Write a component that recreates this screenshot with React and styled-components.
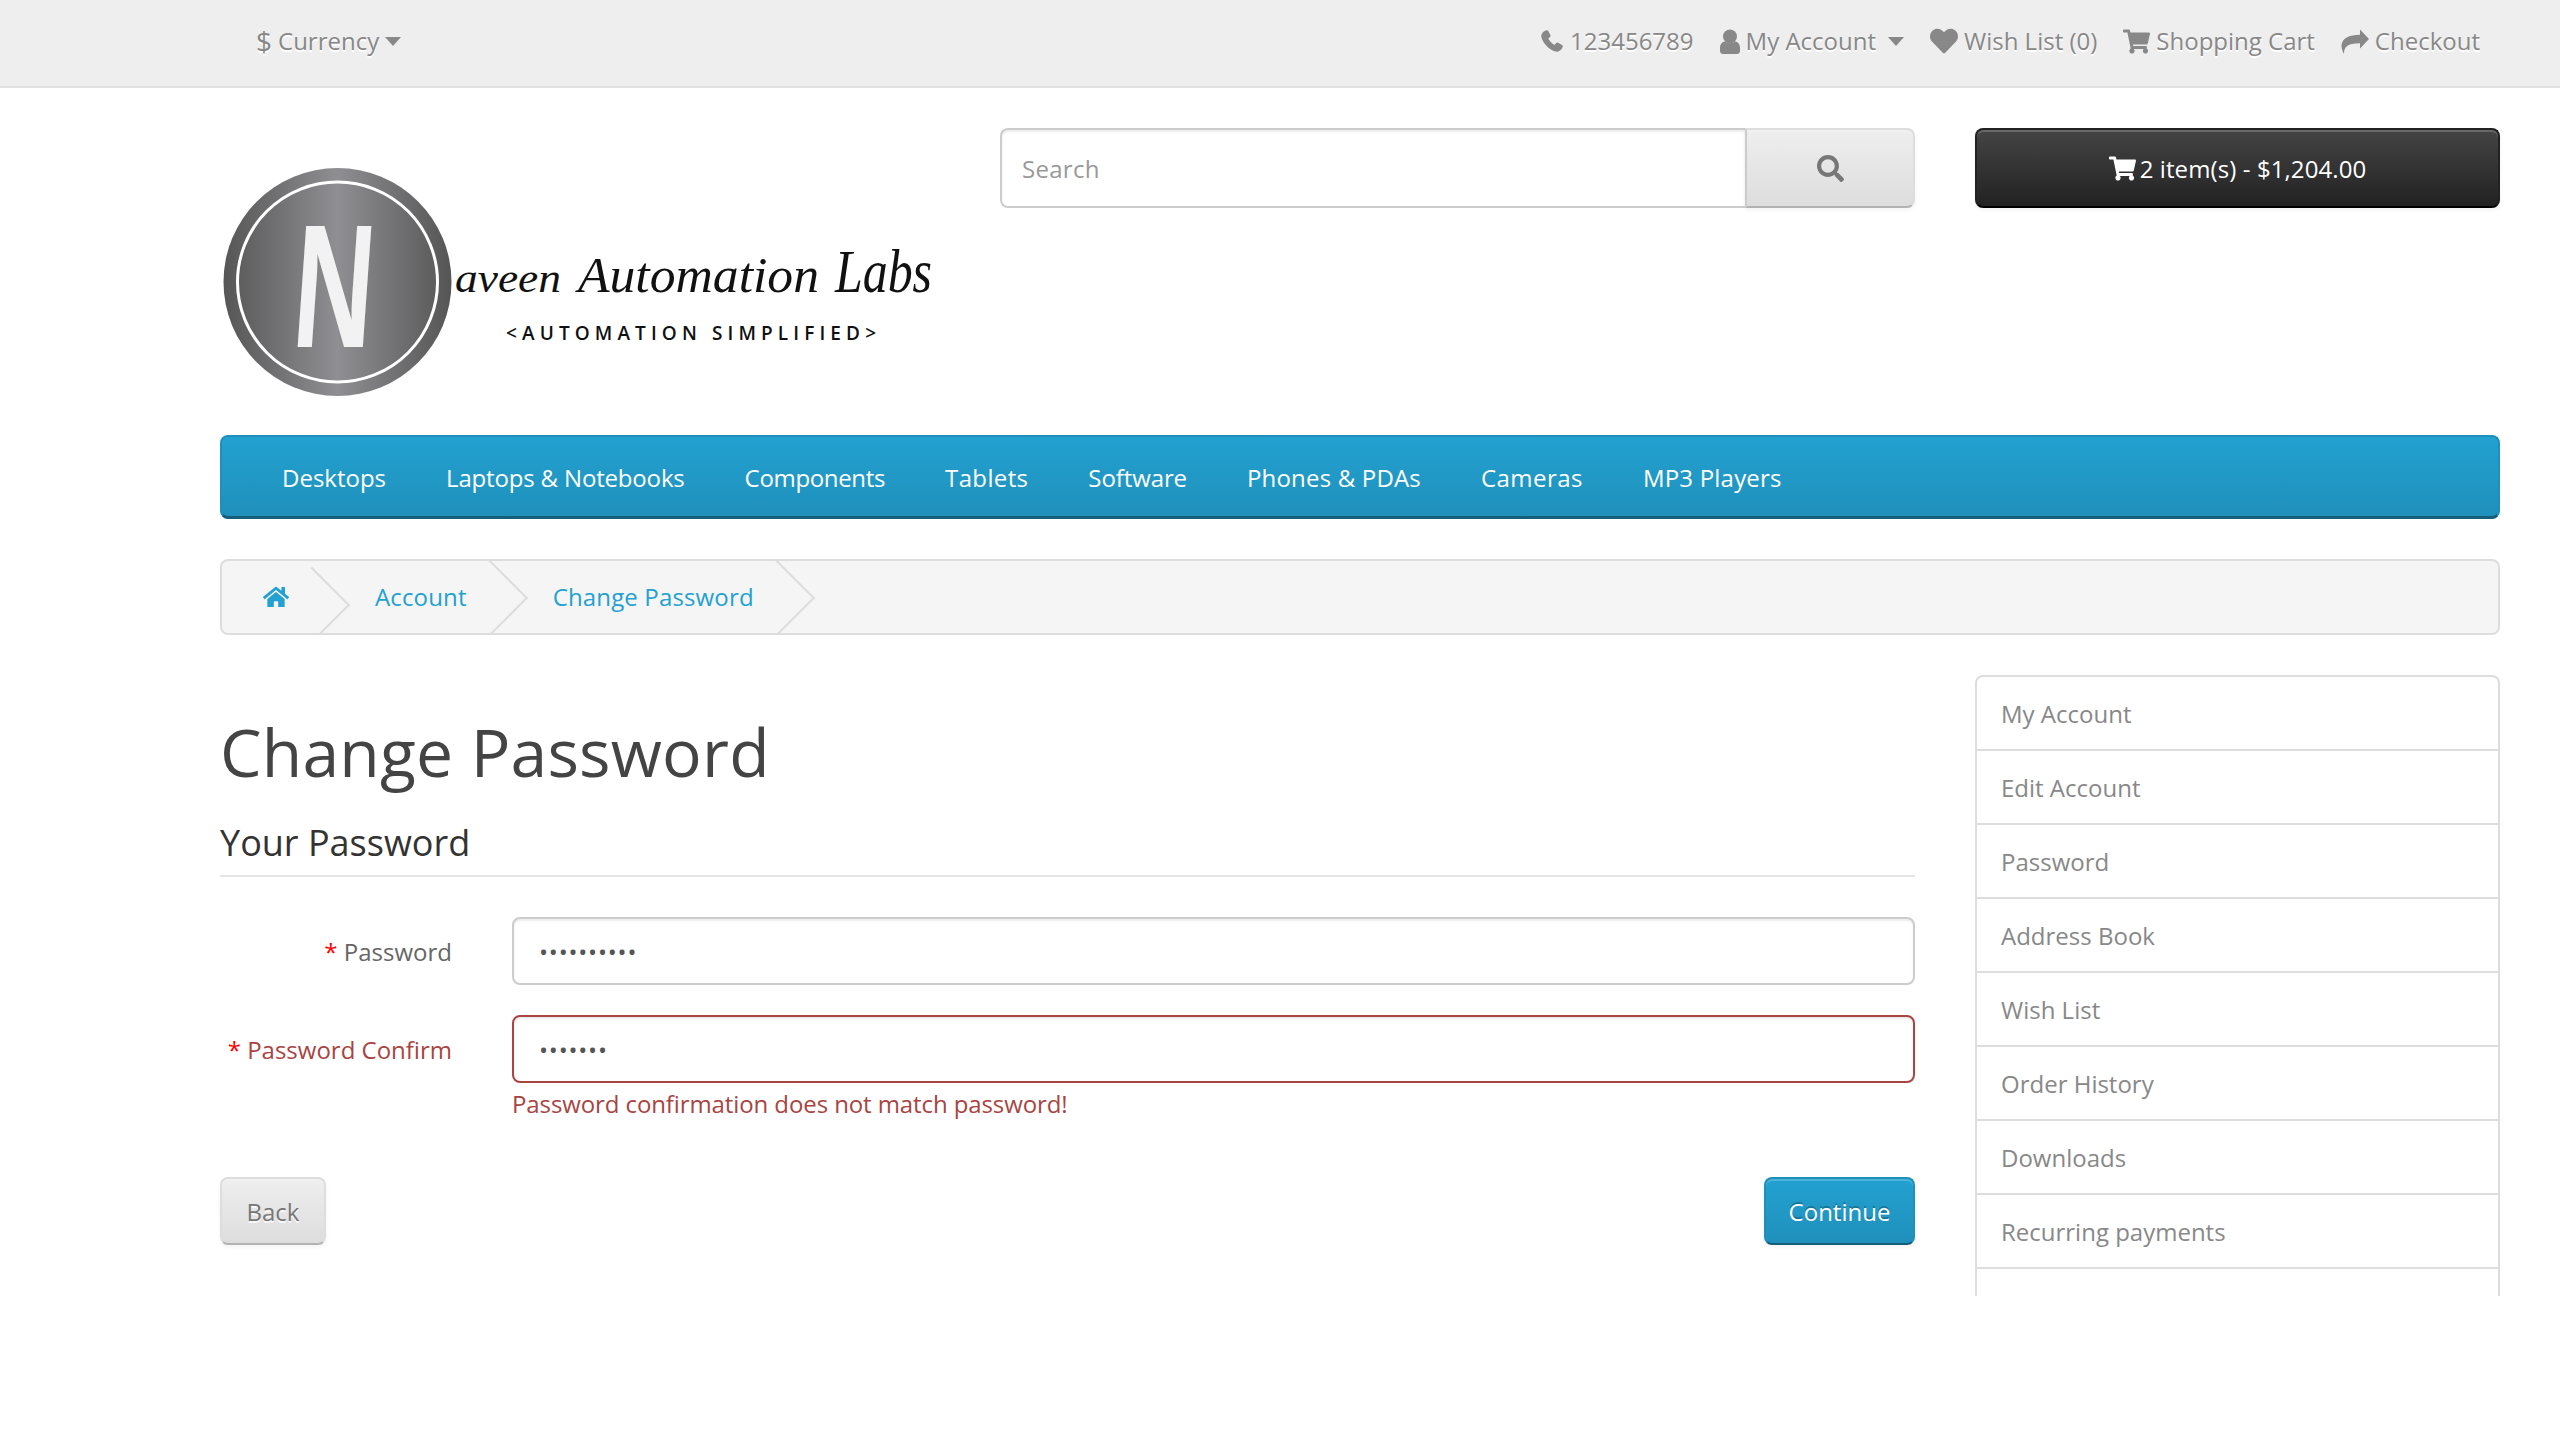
import React from 'react';
import styled, { createGlobalStyle } from 'styled-components';
import { FaHeart, FaShoppingCart, FaSearch, FaHome } from 'react-icons/fa';

const GlobalStyle = createGlobalStyle`
    html, body {
        margin: 0;
        background: #fff;
        overflow: hidden;
    }
    body {
        font-family: "Open Sans", sans-serif;
        font-size: 24px;
        line-height: 40px;
        color: #666;
    }
    * {
        box-sizing: border-box;
    }
`;

const TopBar = styled.div`
    height: 88px;
    background: #eee;
    border-bottom: 2px solid #e2e2e2;
    padding: 0 80px 4px 256px;
    display: flex;
    align-items: center;
    justify-content: space-between;
`;

const TopGroup = styled.div`
    display: flex;
    align-items: center;
    gap: 26px;
`;

const TopLink = styled.a`
    display: flex;
    align-items: center;
    gap: 6px;
    color: #888;
    text-shadow: 0 2px 0 #fff;
    svg {
        flex: none;
        fill: #888;
    }
`;

const HeartIcon = styled(FaHeart)`
    font-size: 28px;
`;

const CartIcon = styled(FaShoppingCart)`
    font-size: 27px;
`;

const Dollar = styled.span`
    font-size: 28px;
`;

const Caret = styled.span`
    width: 0;
    height: 0;
    margin-left: ${({$left}) => $left || 0}px;
    border-top: 9px solid #888;
    border-left: 8px solid transparent;
    border-right: 8px solid transparent;
`;

const Container = styled.div`
    width: 2340px;
    margin-left: 190px;
`;

const Header = styled.header`
    display: grid;
    grid-template-columns: 780px 975px 585px;
    padding-top: 40px;
`;

const HeaderCol = styled.div`
    padding: 0 30px;
`;

const Logo = styled.svg`
    display: block;
    width: 720px;
    height: 260px;
    margin-top: 22px;
    margin-bottom: 25px;
    overflow: visible;
`;

const SearchBox = styled.div`
    display: flex;
    height: 80px;
`;

const SearchInput = styled.input`
    flex: 1;
    min-width: 0;
    height: 80px;
    padding: 0 20px;
    font: 24px "Open Sans", sans-serif;
    letter-spacing: .3px;
    color: #555;
    border: 2px solid #ccc;
    border-right: 0;
    border-radius: 8px 0 0 8px;
    box-shadow: inset 0 2px 2px rgba(0, 0, 0, .075);
    &::placeholder {
        color: #999;
        opacity: 1;
    }
`;

const SearchButton = styled.button`
    width: 170px;
    height: 80px;
    padding: 0;
    display: flex;
    align-items: center;
    justify-content: center;
    color: #777;
    font-size: 27px;
    background: linear-gradient(to bottom, #eee, #ddd);
    border: 2px solid #ddd;
    border-left: 2px solid #ccc;
    border-bottom-color: #b3b3b3;
    border-radius: 0 8px 8px 0;
    box-shadow: inset 0 2px 0 rgba(255, 255, 255, .2), 0 2px 4px rgba(0, 0, 0, .05);
`;

const CartButton = styled.button`
    width: 100%;
    height: 80px;
    display: flex;
    align-items: center;
    justify-content: center;
    gap: 4px;
    font: 24px "Open Sans", sans-serif;
    letter-spacing: .1px;
    color: #fff;
    background: linear-gradient(to bottom, #444, #222);
    border: 2px solid #222;
    border-bottom-color: #000;
    border-radius: 8px;
    box-shadow: inset 0 2px 0 rgba(255, 255, 255, .2), 0 2px 4px rgba(0, 0, 0, .05);
    svg {
        font-size: 27px;
    }
`;

const Content = styled.div`
    padding: 0 30px;
    height: 861px;
    overflow: hidden;
`;

const Menu = styled.nav`
    height: 84px;
    display: flex;
    align-items: center;
    padding: 2px 0 0 30px;
    background: linear-gradient(to bottom, #23a1d1, #1f90bb);
    border: 2px solid #1f90bb;
    border-bottom: 3px solid #145e7a;
    border-radius: 8px;
`;

const MenuLink = styled.a`
    padding: 0 30px;
    color: #fff;
    letter-spacing: ${({$track}) => $track}px;
`;

const Breadcrumb = styled.ul`
    list-style: none;
    display: flex;
    align-items: center;
    height: 76px;
    margin: 40px 0;
    padding: 0 0 0 1px;
    background: #f5f5f5;
    border: 2px solid #ddd;
    border-radius: 8px;
    overflow: hidden;
`;

const Crumb = styled.li`
    position: relative;
    padding: 0 40px;
    margin-right: 6px;
    color: #23a1d1;
    letter-spacing: .15px;
    white-space: nowrap;
    display: flex;
    align-items: center;
    svg {
        font-size: 26px;
    }
    &::after {
        content: '';
        position: absolute;
        top: -6px;
        right: -10px;
        width: 52px;
        height: 52px;
        border-right: 2px solid #ddd;
        border-bottom: 2px solid #ddd;
        transform: rotate(-45deg);
    }
`;

const Columns = styled.div`
    display: grid;
    grid-template-columns: 1695px 525px;
    gap: 60px;
`;

const Title = styled.h1`
    margin: 40px 0 0;
    font-size: 66px;
    font-weight: 400;
    line-height: 72px;
    letter-spacing: .2px;
    color: #444;
`;

const Legend = styled.div`
    margin: 31px 0 40px;
    padding-bottom: 7px;
    font-size: 36px;
    line-height: 50px;
    color: #333;
    border-bottom: 2px solid #e5e5e5;
`;

const FormRow = styled.div`
    display: grid;
    grid-template-columns: 232px 1fr;
    column-gap: 60px;
    margin-bottom: ${({$last}) => ($last ? 0 : 30)}px;
`;

const Label = styled.label`
    padding-top: 15px;
    text-align: right;
    color: ${({$error}) => ($error ? '#a94442' : '#666')};
    &::before {
        content: '* ';
        color: #f00;
    }
`;

const Field = styled.input`
    width: 100%;
    height: 68px;
    padding: 0 25px;
    font: 24px "Open Sans", sans-serif;
    letter-spacing: .8px;
    color: #555;
    border: 2px solid ${({$error}) => ($error ? '#a94442' : '#ccc')};
    border-radius: 8px;
    box-shadow: inset 0 2px 2px rgba(0, 0, 0, .075);
`;

const ErrorText = styled.div`
    height: 40px;
    margin-top: 1px;
    letter-spacing: -.1px;
    color: #a94442;
`;

const Actions = styled.div`
    display: flex;
    justify-content: space-between;
    margin-top: 53px;
`;

const Button = styled.button`
    width: ${({$width}) => $width}px;
    height: 68px;
    padding: 0;
    font: 24px "Open Sans", sans-serif;
    color: ${({$primary}) => ($primary ? '#fff' : '#777')};
    text-shadow: ${({$primary}) => ($primary ? '0 -2px 0 rgba(0, 0, 0, .25)' : '0 2px 0 rgba(255, 255, 255, .75)')};
    background: ${({$primary}) => ($primary
        ? 'linear-gradient(to bottom, #23a1d1, #1f90bb)'
        : 'linear-gradient(to bottom, #eee, #ddd)')};
    border: 2px solid ${({$primary}) => ($primary ? '#1f90bb' : '#ddd')};
    border-bottom-color: ${({$primary}) => ($primary ? '#145e7a' : '#b3b3b3')};
    border-radius: 8px;
    box-shadow: inset 0 2px 0 rgba(255, 255, 255, .2), 0 2px 4px rgba(0, 0, 0, .05);
`;

const SideList = styled.div`
    border: 2px solid #ddd;
    border-bottom: 0;
    border-radius: 8px 8px 0 0;
`;

const SideItem = styled.a`
    display: block;
    height: 74px;
    padding: 17px 24px;
    color: #888;
    border-bottom: 2px solid #ddd;
`;

const accountLinks = [
    'My Account',
    'Edit Account',
    'Password',
    'Address Book',
    'Wish List',
    'Order History',
    'Downloads',
    'Recurring payments',
    '',
];

const menuLinks = [
    { label: 'Desktops', track: 0 },
    { label: 'Laptops & Notebooks', track: -0.17 },
    { label: 'Components', track: -0.33 },
    { label: 'Tablets', track: 0.35 },
    { label: 'Software', track: -0.1 },
    { label: 'Phones & PDAs', track: 0.18 },
    { label: 'Cameras', track: 0.46 },
    { label: 'MP3 Players', track: 0.2 },
];

const PhoneIcon = () => (
    <svg width="24" height="22" viewBox="-1 0 24 22">
        <path d="M5.5.3 7 .6l2.6 4.9-.3 1.2-2 1.9c.5 1.6 4.2 5.5 6.1 6.3l2-2.1 1.2-.3 4.9 2.7.3 1.4c-.2 1.9-3 5.1-5.6 5.1C9.5 21.7.3 12 .3 5.8.3 3.4 3.3.6 5.500.3Z" />
    </svg>
);

const UserIcon = () => (
    <svg width="20" height="25" viewBox="0 0 20 25">
        <circle cx="10" cy="7.5" r="7" />
        <path d="M0 19c0-4 2.500-6.500 5-6.500 2 2.300 8 2.300 10 0 2.500 0 5 2.500 5 6.500v3c0 2-1.500 3-3 3H3c-1.500 0-3-1-3-3Z" />
    </svg>
);

const ShareIcon = () => (
    <svg width="28" height="25" viewBox="0 0 28 25">
        <path d="M28 10 19 .5v5.200C8 5.700.5 9 .5 17c0 3 1.500 6.500 2.500 8 0-7 3-10.700 16-10.700v5.200Z" />
    </svg>
);

const LogoMark = () => (
    <Logo viewBox="0 0 720 260">
        <defs>
            <linearGradient id="disc" x1="0" x2="1" y1="0" y2="0">
                <stop offset="0" stopColor="#565656" />
                <stop offset="0.5" stopColor="#8f8f93" />
                <stop offset="1" stopColor="#555" />
            </linearGradient>
        </defs>
        <circle cx="117.5" cy="132" r="114" fill="url(#disc)" />
        <circle cx="117.5" cy="132" r="100" fill="none" stroke="#fff" strokeWidth="3" />
        <text x="70" y="197" transform="skewX(-4) translate(14 0)" fontFamily="Liberation Sans" fontWeight="700" fontSize="176" fill="#f2f2f2" textLength="80" lengthAdjust="spacingAndGlyphs">N</text>
        <g fontFamily="Liberation Serif" fontStyle="italic" fill="#111">
            <text x="235" y="142" fontSize="40" textLength="106" lengthAdjust="spacingAndGlyphs">aveen</text>
            <text x="358" y="142" fontSize="50" textLength="241" lengthAdjust="spacingAndGlyphs">Automation</text>
            <text x="615" y="142" fontSize="62" textLength="97" lengthAdjust="spacingAndGlyphs">Labs</text>
        </g>
        <text x="286" y="190" fontFamily="Open Sans" fontSize="19" fontWeight="600" fill="#111" textLength="370">{'<AUTOMATION SIMPLIFIED>'}</text>
    </Logo>
);

const App = () => {
    return (
        <>
            <GlobalStyle />
            <TopBar>
                <TopGroup>
                    <TopLink><Dollar>$</Dollar>Currency<Caret /></TopLink>
                </TopGroup>
                <TopGroup>
                    <TopLink><PhoneIcon />123456789</TopLink>
                    <TopLink><UserIcon />My Account<Caret $left={6} /></TopLink>
                    <TopLink><HeartIcon />Wish List (0)</TopLink>
                    <TopLink><CartIcon />Shopping Cart</TopLink>
                    <TopLink><ShareIcon />Checkout</TopLink>
                </TopGroup>
            </TopBar>
            <Container>
                <Header>
                    <HeaderCol><LogoMark /></HeaderCol>
                    <HeaderCol>
                        <SearchBox>
                            <SearchInput placeholder="Search" />
                            <SearchButton><FaSearch /></SearchButton>
                        </SearchBox>
                    </HeaderCol>
                    <HeaderCol>
                        <CartButton><FaShoppingCart />2 item(s) - $1,204.00</CartButton>
                    </HeaderCol>
                </Header>
                <Content>
                    <Menu>
                        {menuLinks.map((link) => <MenuLink key={link.label} $track={link.track}>{link.label}</MenuLink>)}
                    </Menu>
                    <Breadcrumb>
                        <Crumb><FaHome /></Crumb>
                        <Crumb>Account</Crumb>
                        <Crumb>Change Password</Crumb>
                    </Breadcrumb>
                    <Columns>
                        <div>
                            <Title>Change Password</Title>
                            <Legend>Your Password</Legend>
                            <FormRow>
                                <Label>Password</Label>
                                <Field type="password" defaultValue="1234567890" />
                            </FormRow>
                            <FormRow $last>
                                <Label $error>Password Confirm</Label>
                                <div>
                                    <Field $error type="password" defaultValue="1234567" />
                                    <ErrorText>Password confirmation does not match password!</ErrorText>
                                </div>
                            </FormRow>
                            <Actions>
                                <Button $width={106}>Back</Button>
                                <Button $primary $width={151}>Continue</Button>
                            </Actions>
                        </div>
                        <SideList>
                            {accountLinks.map((link, i) => <SideItem key={i}>{link}</SideItem>)}
                        </SideList>
                    </Columns>
                </Content>
            </Container>
        </>
    );
};

export default App;
